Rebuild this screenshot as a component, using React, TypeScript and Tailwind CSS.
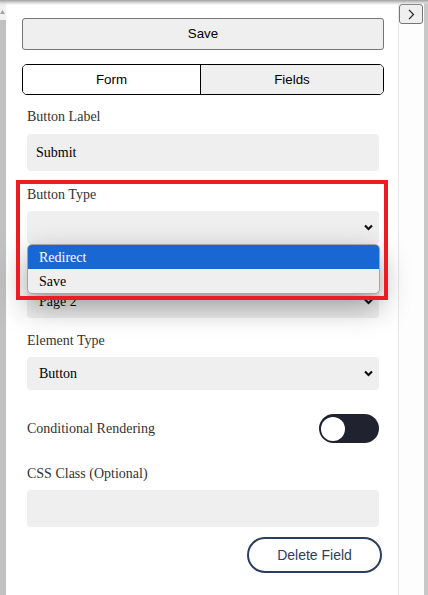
import { useState } from "react";

const labelCls = "block text-[14px] leading-[16px] text-[#333]";

function Chevron() {
    return (
        <svg width="9" height="7" viewBox="0 0 9 7" fill="none">
            <path d="M1 1.5l3.5 3.5 3.5-3.5" stroke="#111" strokeWidth="2.2" />
        </svg>
    );
}

function FakeSelect({ value }: { value: string }) {
    return (
        <div className="h-[33px] rounded-[4px] bg-[#efefef] pl-[12px] pr-[6px] flex items-center justify-between text-[14px] text-black">
            <span>{value}</span>
            <Chevron />
        </div>
    );
}

const App = () => {
    const [tab, setTab] = useState("fields");
    const [conditional, setConditional] = useState(false);

    return (
        <div className="relative w-[428px] h-[595px] overflow-hidden bg-white flex font-['Liberation_Serif','Times_New_Roman',serif]">
            {/* left scrollbar */}
            <div className="w-[6px] flex flex-col shrink-0">
                <div className="h-[20px] bg-[#f1f1f1] relative">
                    <svg className="absolute left-0 top-[10px]" width="5" height="4" viewBox="0 0 5 4">
                        <path d="M0 4L2.5 0L5 4Z" fill="#a3a3a3" />
                    </svg>
                </div>
                <div className="flex-1 bg-[#c1c1c1]" />
            </div>

            {/* panel */}
            <div className="w-[393px] shrink-0 border-r border-[#e8e8e8] pl-[16px] pr-[14px] pt-[18px] flex flex-col">
                <button className="h-[32px] w-full rounded-[3px] border border-[#767676] bg-[#efefef] text-[13.33px] text-black font-['Liberation_Sans',Arial,sans-serif]">
                    Save
                </button>

                <div className="mt-[14px] h-[31px] flex rounded-[5px] border border-black overflow-hidden font-['Liberation_Sans',Arial,sans-serif] text-[13.33px] text-black">
                    <button
                        onClick={() => setTab("form")}
                        className="w-[177px] bg-white"
                    >
                        Form
                    </button>
                    <button
                        onClick={() => setTab("fields")}
                        className={tab === "fields" ? "flex-1 border-l border-black bg-[#efefef]" : "flex-1 border-l border-black bg-[#efefef]"}
                    >
                        Fields
                    </button>
                </div>

                <div className="px-[5px] flex flex-col">
                    <label className={labelCls + " mt-[14px]"}>Button Label</label>
                    <div className="mt-[9px] h-[37px] rounded-[4px] bg-[#efefef] pl-[9px] flex items-center text-[14px] text-black">
                        Submit
                    </div>

                    {/* button type, open dropdown */}
                    <div className="relative mt-[15px]">
                        <label className={labelCls + " pt-[1px]"}>Button Type</label>
                        <div className="relative mt-[8px]">
                            <FakeSelect value="" />
                            <div className="absolute z-10 left-0 top-full w-[353px] rounded-[5px] border border-[#a5a5a5] bg-[#efefef] overflow-hidden text-[14px] shadow-[0_12px_30px_rgba(0,0,0,0.38)]">
                                <div className="h-[24px] pl-[11px] flex items-center bg-[#1967d2] text-white">Redirect</div>
                                <div className="h-[24px] pl-[11px] flex items-center text-black">Save</div>
                            </div>
                        </div>
                        {/* annotation box */}
                        <div className="absolute z-20 left-[-11px] top-[-6px] w-[372px] h-[120px] border-[4px] border-[#ed1c24] pointer-events-none" />
                    </div>

                    {/* label hidden under the open list */}
                    <div className="mt-[17px] h-[16px]" />
                    <div className="mt-[8px]">
                        <FakeSelect value="Page 2" />
                    </div>

                    <label className={labelCls + " mt-[15px]"}>Element Type</label>
                    <div className="mt-[8px]">
                        <FakeSelect value="Button" />
                    </div>

                    <div className="mt-[24px] h-[29px] flex items-center justify-between">
                        <span className="text-[14px] leading-[16px] text-[#333]">Conditional Rendering</span>
                        <button
                            onClick={() => setConditional(!conditional)}
                            className="w-[60px] h-[29px] rounded-full bg-[#202230] flex items-center px-[2px]"
                        >
                            <span className={conditional ? "ml-auto w-[24px] h-[24px] rounded-full bg-white" : "w-[24px] h-[24px] rounded-full bg-white"} />
                        </button>
                    </div>

                    <label className={labelCls + " mt-[23px]"}>CSS Class (Optional)</label>
                    <div className="mt-[8px] h-[37px] rounded-[4px] bg-[#efefef]" />

                    <button className="mt-[10px] self-end mr-[-3px] w-[135px] h-[36px] rounded-full border-2 border-[#2c3e5f] bg-white text-[14px] text-[#2c3e5f] font-['Liberation_Sans',Arial,sans-serif]">
                        Delete Field
                    </button>
                </div>
            </div>

            {/* right side */}
            <div className="flex-1 flex">
                <div className="w-[25px] pt-[4px] bg-[#fdfdfd]">
                    <button className="w-[24px] h-[20px] rounded-[3px] border border-[#767676] bg-[#efefef] flex items-center justify-center">
                        <svg width="7" height="11" viewBox="0 0 7 11" fill="none">
                            <path d="M1 0.8l4.5 4.7L1 10.2" stroke="#222" strokeWidth="1.2" />
                        </svg>
                    </button>
                </div>
                <div className="flex-1 bg-[#c8c8c8]" />
            </div>

            {/* top inset shadow */}
            <div className="absolute z-30 inset-x-0 top-0 h-[5px] bg-linear-to-b from-[#a0a0a0] via-[#d4d4d4] to-transparent pointer-events-none" />
        </div>
    );
};

export default App;
